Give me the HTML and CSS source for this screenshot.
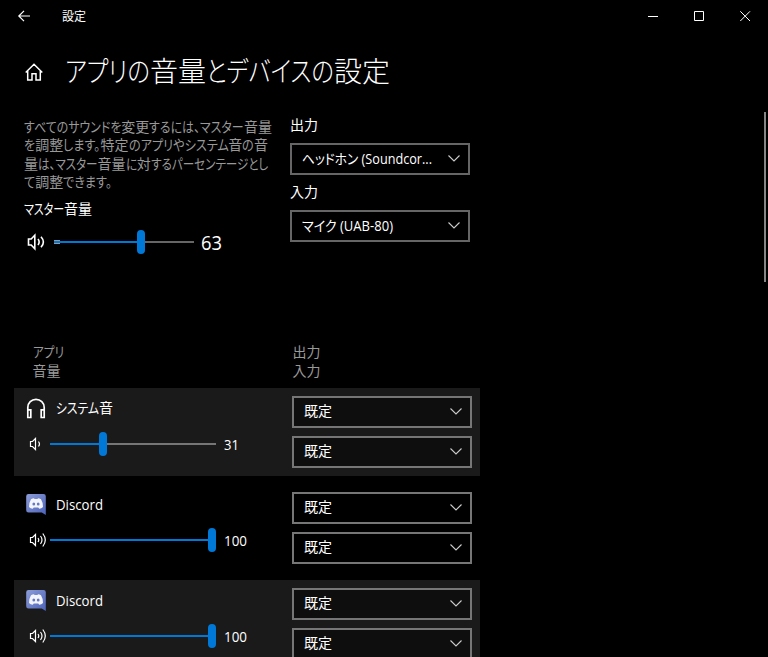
FILE: index.html
```html
<!DOCTYPE html>
<html lang="ja">
<head>
<meta charset="utf-8">
<title>設定</title>
<link rel="stylesheet" href="styles.css">
</head>
<body>
<svg class="defs" width="0" height="0" aria-hidden="true">
  <defs>
    <linearGradient id="blurple" x1="0" y1="0" x2="1" y2="1"><stop offset="0" stop-color="#8c9dd8"/><stop offset="1" stop-color="#4c62b8"/></linearGradient>
    <symbol id="chevron" viewBox="0 0 12 7"><path d="M.5 .5 6 6 11.5 .5"/></symbol>
    <symbol id="discord" viewBox="0 0 20 21">
      <path fill="url(#blurple)" d="M2.5 0h15A2.3 2.3 0 0 1 19.800 2.300V21L15.800 18.500H2.500A2.300 2.300 0 0 1 .2 16.200V2.300A2.300 2.300 0 0 1 2.500 0Z"/>
      <path fill="#f4f5fb" d="M5 5.300Q6.500 4.300 8 4.300L8.500 5H11.500L12 4.300Q13.500 4.300 15 5.300Q17 8.500 17 13Q15.500 14.800 13.200 14.800L12.300 13.600H7.700L6.800 14.800Q4.500 14.800 3 13Q3 8.500 5 5.300Z"/>
      <ellipse cx="7.800" cy="10" rx="1.400" ry="1.500" fill="#6579c8"/><ellipse cx="12.200" cy="10" rx="1.400" ry="1.500" fill="#6579c8"/>
    </symbol>
    <symbol id="volume-high" viewBox="0 0 18 16"><path d="M1.500 5.500H3.500L6.500 2.500V13.500L3.500 10.500H1.500ZM9 6Q10.500 8 9 10M11.500 4Q14.500 8 11.500 12M13.800 1.500Q18.800 8 13.800 14.500"/></symbol>
  </defs>
</svg>
<header class="titlebar">
  <svg class="back" viewBox="0 0 13 12"><path d="M12 6H1M6 .8 .8 6 6 11.200"/></svg>
  <span class="window-name">設定</span>
  <div class="controls">
    <svg viewBox="0 0 11 11"><path d="M0 5.500H10"/></svg>
    <svg viewBox="0 0 11 11"><path d="M.5 .5H9.500V9.500H.5Z"/></svg>
    <svg viewBox="0 0 11 11"><path d="M.3 .3 10 10M10 .3 .3 10"/></svg>
  </div>
</header>
<main>
  <div class="heading">
    <svg class="home" viewBox="0 0 18 18"><path d="M.7 9.500 9 1.200 17.300 9.500M2.700 8V17H7V10.800H11V17H15.300V8"/></svg>
    <h1 data-width="325">アプリの音量とデバイスの設定</h1>
  </div>
  <section class="master">
    <div class="master-volume">
      <p class="description"><span data-width="248">すべてのサウンドを変更するには、マスター音量</span><span data-width="244">を調整します。特定のアプリやシステム音の音</span><span data-width="244">量は、マスター音量に対するパーセンテージとし</span><span data-width="88">て調整できます。</span></p>
      <div class="label master-label" data-width="68">マスター音量</div>
      <div class="volume">
        <svg class="speaker" viewBox="0 0 18 16"><path d="M1.500 5H4.200L7.800 1.200V14.800L4.200 11H1.500ZM11 5Q13.300 8 11 11M14 2.700Q18.800 8 14 13.300"/></svg>
        <div class="slider focus-start"><i class="fill" style="width:83px"></i><i class="thumb"></i></div>
        <span class="value" data-width="21">63</span>
      </div>
    </div>
    <div class="devices">
      <div class="label">出力</div>
      <div class="combo"><span data-width="130">ヘッドホン (Soundcor...</span><svg><use href="#chevron"/></svg></div>
      <div class="label">入力</div>
      <div class="combo"><span data-width="91">マイク (UAB-80)</span><svg><use href="#chevron"/></svg></div>
    </div>
  </section>
  <section class="apps">
    <div class="columns"><div><div data-width="31">アプリ</div><div>音量</div></div><div>出力<br>入力</div></div>
    <article class="app shaded">
      <div class="info">
        <div class="name"><svg class="app-icon" viewBox="0 0 20 21"><path class="line" d="M1.800 13V9.500a8.200 8.200 0 0 1 16.400 0V13M1.800 11.800H4.800V19.500H1.800ZM15.200 11.800H18.200V19.500H15.200Z"/></svg><span data-width="57">システム音</span></div>
        <div class="volume"><svg class="speaker" viewBox="0 0 18 16"><path d="M1.500 5.500H3.500L6.500 2.500V13.500L3.500 10.500H1.500ZM9.500 5.500Q11.500 8 9.500 10.500"/></svg><div class="slider"><i class="fill" style="width:49px"></i><i class="thumb"></i></div><span class="value" data-width="15">31</span></div>
      </div>
      <div class="routing"><div class="combo"><span>既定</span><svg><use href="#chevron"/></svg></div><div class="combo"><span>既定</span><svg><use href="#chevron"/></svg></div></div>
    </article>
    <article class="app">
      <div class="info">
        <div class="name"><svg class="app-icon"><use href="#discord"/></svg><span class="latin" data-width="47">Discord</span></div>
        <div class="volume"><svg class="speaker"><use href="#volume-high"/></svg><div class="slider"><i class="fill" style="width:158px"></i><i class="thumb"></i></div><span class="value" data-width="23">100</span></div>
      </div>
      <div class="routing"><div class="combo"><span>既定</span><svg><use href="#chevron"/></svg></div><div class="combo"><span>既定</span><svg><use href="#chevron"/></svg></div></div>
    </article>
    <article class="app shaded">
      <div class="info">
        <div class="name"><svg class="app-icon"><use href="#discord"/></svg><span class="latin" data-width="47">Discord</span></div>
        <div class="volume"><svg class="speaker"><use href="#volume-high"/></svg><div class="slider"><i class="fill" style="width:158px"></i><i class="thumb"></i></div><span class="value" data-width="23">100</span></div>
      </div>
      <div class="routing"><div class="combo"><span>既定</span><svg><use href="#chevron"/></svg></div><div class="combo"><span>既定</span><svg><use href="#chevron"/></svg></div></div>
    </article>
  </section>
</main>
<div class="scrollbar"></div>
<script src="condense.js"></script>
</body>
</html>
```
FILE: styles.css
```css
* { box-sizing: border-box; }
html, body { height: 100%; overflow: hidden; }
body { margin: 0; background: #000; color: #fff; font: 14px/18.4px "Open Sans", "Noto Sans CJK JP", sans-serif; font-feature-settings: "palt"; }
svg { display: block; flex: none; fill: none; stroke: #fff; stroke-width: 1.2; overflow: visible; }
.defs { position: absolute; }
#discord { stroke: none; }
h1, p { margin: 0; font-weight: 400; }
.run { display: inline-block; white-space: pre; transform-origin: 0 50%; }
[data-width] { white-space: nowrap; }
.titlebar { display: flex; align-items: center; height: 32px; padding-left: 18px; }
.back { width: 13px; height: 12px; }
.window-name { margin-left: 31px; padding-top: 2px; font-size: 12px; font-feature-settings: normal; }
.controls { display: flex; gap: 35px; margin-left: auto; padding-right: 17px; }
.controls svg { width: 11px; height: 11px; stroke-width: 1; }
.heading { display: flex; align-items: center; height: 80px; padding-left: 25px; }
.home { width: 18px; height: 18px; stroke-width: 1.5; }
h1 { margin: -2px 0 0 22px; font-size: 28px; font-weight: 300; line-height: 40px; }
.master { display: flex; height: 230px; padding: 4px 0 0 24px; }
.master-volume { width: 266px; padding-top: 1px; }
.description { color: #999; padding-top: 1px; }
.description span[data-width] { display: block; height: 18.4px; }
.label { white-space: nowrap; height: 18px; }
.master-label { margin-top: 8px; }
.volume { display: flex; align-items: center; height: 24px; }
.master-volume .volume { margin-top: 12.400px; padding-left: 3px; }
.speaker { width: 18px; height: 16px; }
.master-volume .speaker { stroke-width: 1.600; }
.slider { display: flex; align-items: center; width: 166px; height: 24px; background: linear-gradient(#767676, #767676) center / 100% 2px no-repeat; }
.fill { height: 2px; background: #0078d7; }
.thumb { width: 8px; height: 24px; border-radius: 4px; background: #0078d7; }
.master-volume .slider { width: 140px; margin: 0 7px 0 9px; background-image: linear-gradient(#666, #666); }
.master-volume .focus-start { background: linear-gradient(#999, #999) 0 50% / 6px 4px no-repeat, linear-gradient(#666, #666) center / 100% 2px no-repeat; }
.value { font-size: 14px; padding-top: 2px; }
.master-volume .value { font-size: 19.500px; padding-top: 3px; }
.devices { width: 180px; }
.devices .combo { margin: 9px 0 8px; }
.devices .combo + .label { padding-top: 0; }
.combo { display: flex; align-items: center; justify-content: space-between; width: 180px; height: 32px; padding: 0 8px 0 10px; border: 2px solid #666; white-space: nowrap; }
.combo svg { width: 12px; height: 7px; margin-top: -1px; stroke: #ccc; stroke-width: 1.1; }
.columns { display: grid; grid-template-columns: 260px 1fr; padding-left: 32.500px; height: 46px; color: #999; line-height: 19px; }
.app { display: flex; width: 466px; height: 88px; margin: 0 0 8px 14px; padding: 8px; }
.shaded { background: #1a1a1a; }
.info { width: 270px; padding-left: 4px; }
.name { display: flex; align-items: center; height: 25px; gap: 10px; }
.app-icon { width: 20px; height: 21px; }
.line { stroke-width: 1.700; }
.latin { font-size: 14px; padding-top: 1px; }
.app .volume { margin-top: 11px; padding-left: 3px; }
.app .slider { margin: 0 8px 0 3px; }
.routing { display: grid; gap: 8px; }
.routing .combo { border-color: #767676; }
.routing .combo span { margin-top: -1px; }
.shaded .combo { background: #0e0e0e; }
.scrollbar { position: absolute; left: 764px; top: 112px; width: 2px; height: 170px; background: #858585; }
```
FILE: condense.js
```js
// Condenses kana and Latin runs so that each label has its data-width; kanji keep their full width.
for (const label of document.querySelectorAll('[data-width]')) {
  const parts = label.textContent.match(/[\u4e00-\u9fff]+|[^\u4e00-\u9fff]+/g);
  label.textContent = '';
  const runs = [];
  let fixed = 0;
  for (const part of parts) {
    const run = document.createElement('span');
    run.className = 'run';
    run.textContent = part;
    label.append(run);
    const width = run.getBoundingClientRect().width;
    if (/[\u4e00-\u9fff]/.test(part)) fixed += width;
    else runs.push([run, width]);
  }
  const total = runs.reduce((sum, [, width]) => sum + width, 0);
  const scale = (Number(label.dataset.width) - fixed) / total;
  for (const [run, width] of runs) {
    run.style.width = `${width * scale}px`;
    run.style.transform = `scaleX(${scale})`;
  }
}
```
